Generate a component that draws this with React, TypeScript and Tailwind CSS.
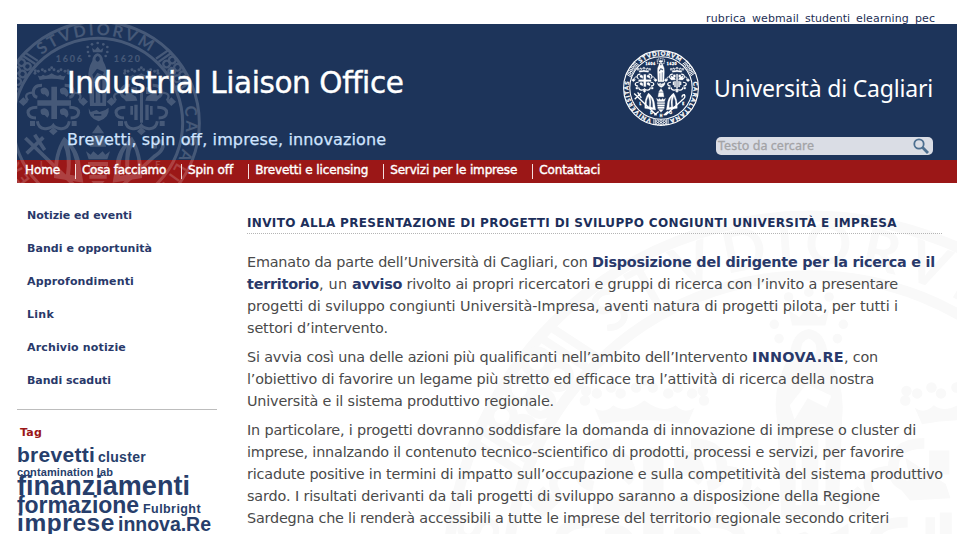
import { useId, useLayoutEffect, useRef } from "react";
import type { ReactNode } from "react";

/** A run of text whose tracking is adjusted so that it fills exactly `w` pixels. */
function Fit({ w, className = "", children }: { w: number; className?: string; children: string }) {
  const ref = useRef<HTMLSpanElement>(null);
  useLayoutEffect(() => {
    const el = ref.current;
    if (!el) return;
    el.style.letterSpacing = "0px";
    const natural = el.getBoundingClientRect().width;
    el.style.letterSpacing = `${(w - natural) / children.length}px`;
  }, [w, children]);
  return (
    <span ref={ref} className={`inline-block whitespace-pre ${className}`}>
      {children}
    </span>
  );
}

function Crown({ x, y }: { x: number; y: number }) {
  return (
    <g transform={`translate(${x} ${y})`}>
      <path d="M-36 22 L-42 8 Q-34 14 -26 6 Q-16 14 0 2 Q16 14 26 6 Q34 14 42 8 L36 22 Q0 15 -36 22Z" />
      {[[-50, 2], [-49, -6], [-40, -4], [-28, -9], [-20, -4], [-7, -9], [0, -15], [7, -9], [20, -4], [28, -9], [40, -4], [49, -6], [50, 2]].map(
        ([dx, dy]) => (
          <circle key={`${dx}${dy}`} cx={dx} cy={dy} r="4.4" />
        ),
      )}
    </g>
  );
}

function Frame({ x, y }: { x: number; y: number }) {
  return (
    <g transform={`translate(${x} ${y})`}>
      <path
        fill="none"
        stroke="currentColor"
        strokeWidth="9"
        d="M-34 -54 Q-62 -54 -60 -30 Q-58 -20 -48 -18 M34 -54 Q62 -54 60 -30 Q58 -20 48 -18 M-48 12 Q-76 12 -76 28 Q-74 44 -52 44 M48 12 Q76 12 76 28 Q74 44 52 44 M-48 54 Q-44 78 -22 76 Q-6 74 0 66 Q6 74 22 76 Q44 78 48 54"
      />
      <path fill="none" stroke="currentColor" strokeWidth="7" d="M-62 -32 Q-92 -30 -76 -8 M62 -32 Q92 -30 76 -8" />
      <path d="M-104 -5 l14 -13 14 13 -14 13Z M76 -5 l14 -13 14 13 -14 13Z M-13 84 l13 -12 13 12 -13 12Z" />
      <path d="M-70 53h15v15h-15Z M55 53h15v15h-15Z" />
    </g>
  );
}

function Knots({ angle }: { angle: number }) {
  return (
    <g transform={`rotate(${angle} 294 369)`} fill="none" stroke="currentColor" strokeWidth="7">
      <path d="M236 68v48M352 68v48M248 67v48M340 67v48" />
      {[267, 294, 321].map((cx) => (
        <g key={cx}>
          <circle cx={cx} cy="78" r="10" />
          <circle cx={cx} cy="99" r="10" />
        </g>
      ))}
    </g>
  );
}

function Seal({ className, years = true }: { className: string; years?: boolean }) {
  const ring = useId();
  const lettering = "font-['Lato','Liberation_Sans',sans-serif] font-bold";
  return (
    <svg viewBox="-15 60 618 618" fill="currentColor" className={className} aria-hidden="true">
      <defs>
        <path id={ring} d="M294 633 A264 264 0 0 1 294 105 A264 264 0 0 1 294 633" />
      </defs>
      <g fill="none" stroke="currentColor" strokeWidth="9">
        <circle cx="294" cy="369" r="304" />
        <circle cx="294" cy="369" r="254" />
      </g>
      <text fontSize="48" className={lettering}>
        <textPath href={`#${ring}`} startOffset="39%" textLength="348">STVDIORVM</textPath>
      </text>
      <text fontSize="48" className={lettering}>
        <textPath href={`#${ring}`} startOffset="72%" textLength="392">CARALITANA</textPath>
      </text>
      <text fontSize="48" className={lettering}>
        <textPath href={`#${ring}`} startOffset="4.7%" textLength="388">VNIVERSITAS</textPath>
      </text>
      <Knots angle={-57} />
      <Knots angle={55} />
      <Knots angle={180} />
      <g fontSize="27" className={lettering}>
        {years && (
          <>
            <text x="167" y="186" textLength="79">1606</text>
            <text x="341" y="186" textLength="79">1620</text>
          </>
        )}
        <text x="120" y="505">L</text>
        <text x="466" y="505">E</text>
        <text x="206" y="580">D</text>
        <text x="284" y="604">H</text>
        <text x="362" y="580">O</text>
      </g>

      {/* crowned figure */}
      {[[264, 156], [263, 141], [276, 133], [293, 129], [310, 133], [322, 141], [322, 156], [268, 168], [317, 168]].map(([x, y]) => (
        <circle key={`${x}-${y}`} cx={x} cy={y} r="4" />
      ))}
      <path d="M279 157 L276 144 L285 150 L293 140 L301 150 L310 144 L307 157Z" />
      <path
        fillRule="evenodd"
        d="M293 160 Q307 162 309 182 Q324 208 321 234 L318 318 L270 318 L266 234 Q262 208 277 182 Q279 162 293 160Z M293 168 Q285 171 287 180 Q293 190 299 180 Q301 171 293 168Z M277 224 L291 206 L312 216 L308 226 L292 218 L281 236Z M282 250h5v58h-5Z M301 240h6v68h-6Z"
      />
      <path fillRule="evenodd" d="M266 325 L272 336 L290 330 L298 336 L316 330 L326 323 Q330 352 296 364 Q264 354 266 325Z M282 342h22v5h-22Z" />

      {/* shield with cross and four heads */}
      <Crown x={155} y={218} />
      <Frame x={160} y={310} />
      <path d="M154 260h17v97h-17Z M112 301h101v16h-101Z" />
      {[[134, 275], [192, 275], [134, 337], [192, 337]].map(([x, y]) => (
        <path key={`${x}-${y}`} d={`M${x - 12} ${y - 8} q12 -10 22 2 q8 14 -2 22 l-8 -8 q-14 2 -12 -16Z`} />
      ))}

      {/* shield with towers and pales */}
      <Crown x={424} y={218} />
      <Frame x={424} y={310} />
      <path d="M420 256h9v112h-9Z M391 318h8v26h-8Z M403 314h10v46h-10Z M436 314h10v46h-10Z M450 318h8v26h-8Z M374 268l34 22 4 12-34 2-10-12 10-6Z M474 268l-34 22-4 12 34 2 10-12-10-6Z M394 262h17v20h-17Z M438 262h17v20h-17Z" />

      {/* central column */}
      <path d="M294 374 L312 400 L276 400Z M258 454l14 10 8-10 14 12 14-12 8 10 14-10-8 24h-56Z M264 486h60v12h-60Z M266 505h56v12h-56Z M268 524h52v12h-52Z M274 543l20 24 20-24Z M276 406h36l6 34h-48Z" />

      {/* crossed staffs and mitres */}
      <path
        fill="none"
        stroke="currentColor"
        strokeWidth="11"
        d="M80 460 L130 412 M76 414 L258 590 M104 404l30 46 M330 590 L462 470 Q500 446 484 424 Q462 424 466 446 M240 590 L275 560 M350 560 L316 590"
      />
      {[1, -1].map((side) => (
        <path
          key={side}
          transform={side === 1 ? undefined : "translate(588 0) scale(-1 1)"}
          fillRule="evenodd"
          d="M192 410 Q240 448 242 500 L250 548 L162 534 Q158 460 192 410Z M190 436 Q172 470 174 520 L198 524 Q206 470 190 436Z M208 440 Q216 480 210 524 L228 527 Q230 474 208 440Z"
        />
      ))}
    </svg>
  );
}

const topLinks: [string, number][] = [
  ["rubrica", 40],
  ["webmail", 47],
  ["studenti", 45],
  ["elearning", 53],
  ["pec", 20],
];

const navItems: [string, number][] = [
  ["Cosa facciamo", 84],
  ["Spin off", 45],
  ["Brevetti e licensing", 113],
  ["Servizi per le imprese", 127],
  ["Contattaci", 61],
];

const sideItems: [string, number][] = [
  ["Notizie ed eventi", 105],
  ["Bandi e opportunità", 125],
  ["Approfondimenti", 107],
  ["Link", 27],
  ["Archivio notizie", 99],
  ["Bandi scaduti", 84],
];

function Line({ children }: { children: ReactNode }) {
  return <span className="flex h-[22px]">{children}</span>;
}

const strong = "font-bold text-[#29396a]";

export default function App() {
  return (
    <div className="h-[534px] w-[976px] overflow-hidden bg-white pl-[17px] font-['DejaVu_Sans',Verdana,sans-serif]">
      <div className="w-[940px]">
        <div className="flex h-6 items-start justify-end gap-[6px] pt-3 pr-[22px] text-[11px] leading-[14px] text-[#1d2f55]">
          {topLinks.map(([label, w]) => (
            <Fit key={label} w={w}>{label}</Fit>
          ))}
        </div>

        <header className="relative h-[159px] overflow-hidden bg-[#1d345a]">
          <div className="flex h-[136px] justify-between pr-6 pl-[50px]">
            <div className="flex flex-col pt-[41px]">
              <h1 className="relative z-10 h-9 text-[29.5px] leading-9 text-white [-webkit-text-stroke:0.4px_white]">
                <Fit w={336}>Industrial Liaison Office</Fit>
              </h1>
              <p className="relative z-10 mt-[29px] text-[16px] leading-5 text-[#cfe4ff] [-webkit-text-stroke:0.25px_#cfe4ff]">
                <Fit w={319}>Brevetti, spin off, imprese, innovazione</Fit>
              </p>
            </div>
            <div className="flex pt-[26px]">
              <Seal className="-ml-px size-[76px] stroke-current text-white [stroke-width:2.5]" />
              <div className="ml-[17px] flex w-[217px] flex-col">
                <div className="mt-[22px] -ml-[2px] h-8 font-['Noto_Sans','Open_Sans',sans-serif] text-[23px] leading-8 text-white">
                  <Fit w={219}>Università di Cagliari</Fit>
                </div>
                <div className="mt-[33px] flex h-[18px] items-center justify-between rounded-[5px] bg-[#dadde5] pr-1 pl-[2px] text-[#a3a3a6]">
                  <Fit w={96} className="font-['Noto_Sans','Open_Sans',sans-serif] text-[12.5px] leading-[18px] [-webkit-text-stroke:0.3px_#a3a3a6]">Testo da cercare</Fit>
                  <svg viewBox="0 0 16 16" className="size-4 text-[#4d6f90]" fill="none" stroke="currentColor" aria-hidden="true">
                    <circle cx="6" cy="6" r="4.7" strokeWidth="1.8" />
                    <path d="M9.6 9.6 L15 15" strokeWidth="2.8" />
                  </svg>
                </div>
              </div>
            </div>
          </div>
          <nav className="flex h-[23px] items-start bg-[#9b1717] pl-2 text-[12px] leading-5 text-white [-webkit-text-stroke:0.4px_white]">
            <Fit w={35} className="relative z-10">Home</Fit>
            {navItems.map(([label, w]) => (
              <span key={label} className="relative z-10 ml-[15px] flex">
                <span className="mt-1 mr-[6px] h-[15px] w-px bg-[#f3dede]" />
                <Fit w={w}>{label}</Fit>
              </span>
            ))}
          </nav>
          <Seal className="absolute -top-1 left-[-22px] size-[206px] text-white opacity-[0.18]" />
        </header>

        <div className="relative flex h-[351px] overflow-hidden">
          <Seal years={false} className="absolute top-[27px] left-[425px] size-[736px] text-[#f9f9f9]" />

          <aside className="relative w-[200px] shrink-0">
            <ul className="h-[227px] border-b border-[#bdbdbd] pt-4 pl-[10px] text-[11px] font-bold text-[#29396a]">
              {sideItems.map(([label, w]) => (
                <li key={label} className="h-[33px] leading-[33px]">
                  <Fit w={w}>{label}</Fit>
                </li>
              ))}
            </ul>
            <h2 className="mt-[15px] h-5 pl-[3px] text-[11px] leading-[16px] font-bold text-[#9b1717]">
              <Fit w={22}>Tag</Fit>
            </h2>
            <div className="font-['Liberation_Sans',Arial,sans-serif] font-bold text-[#273e6b]">
              <div className="flex h-5 items-baseline gap-[3px] leading-5">
                <Fit w={78} className="text-[21px]">brevetti</Fit>
                <Fit w={48} className="text-[14px]">cluster</Fit>
              </div>
              <div className="flex h-[13px] items-baseline pt-px leading-[13px]">
                <Fit w={96} className="text-[11px]">contamination lab</Fit>
              </div>
              <div className="flex h-[17px] items-baseline leading-[17px]">
                <Fit w={173} className="text-[27px]">finanziamenti</Fit>
              </div>
              <div className="flex h-5 items-baseline gap-1 leading-5">
                <Fit w={122} className="text-[23px]">formazione</Fit>
                <Fit w={58} className="text-[12.5px]">Fulbright</Fit>
              </div>
              <div className="flex h-4 items-baseline gap-[3px] leading-4">
                <Fit w={98} className="text-[24.5px]">imprese</Fit>
                <Fit w={93} className="text-[19.5px]">innova.Re</Fit>
              </div>
            </div>
          </aside>

          <main className="relative ml-[30px] w-[695px] pt-8">
            <h2 className="h-[19px] border-b border-dotted border-[#b5b5b5] text-[12px] leading-4 font-bold text-[#1d2f5b]">
              <Fit w={650}>INVITO ALLA PRESENTAZIONE DI PROGETTI DI SVILUPPO CONGIUNTI UNIVERSITÀ E IMPRESA</Fit>
            </h2>
            <div className="mt-[17px] flex flex-col gap-[7px] text-[14.4px] leading-[22px] text-[#4a4a4a]">
              <p>
                <Line>
                  <Fit w={345}>{"Emanato da parte dell’Università di Cagliari, con "}</Fit>
                  <Fit w={343} className={strong}>Disposizione del dirigente per la ricerca e il</Fit>
                </Line>
                <Line>
                  <Fit w={72} className={strong}>territorio</Fit>
                  <Fit w={33}>{", un "}</Fit>
                  <Fit w={50} className={strong}>avviso</Fit>
                  <Fit w={496}>{" rivolto ai propri ricercatori e gruppi di ricerca con l’invito a presentare"}</Fit>
                </Line>
                <Line><Fit w={651}>progetti di sviluppo congiunti Università-Impresa, aventi natura di progetti pilota, per tutti i</Fit></Line>
                <Line><Fit w={141}>settori d’intervento.</Fit></Line>
              </p>
              <p>
                <Line>
                  <Fit w={505}>{"Si avvia così una delle azioni più qualificanti nell’ambito dell’Intervento "}</Fit>
                  <Fit w={92} className={strong}>INNOVA.RE</Fit>
                  <Fit w={34}>, con</Fit>
                </Line>
                <Line><Fit w={627}>l’obiettivo di favorire un legame più stretto ed efficace tra l’attività di ricerca della nostra</Fit></Line>
                <Line><Fit w={307}>Università e il sistema produttivo regionale.</Fit></Line>
              </p>
              <p>
                <Line><Fit w={669}>In particolare, i progetti dovranno soddisfare la domanda di innovazione di imprese o cluster di</Fit></Line>
                <Line><Fit w={657}>imprese, innalzando il contenuto tecnico-scientifico di prodotti, processi e servizi, per favorire</Fit></Line>
                <Line><Fit w={696}>ricadute positive in termini di impatto sull’occupazione e sulla competitività del sistema produttivo</Fit></Line>
                <Line><Fit w={633}>sardo. I risultati derivanti da tali progetti di sviluppo saranno a disposizione della Regione</Fit></Line>
                <Line><Fit w={642}>Sardegna che li renderà accessibili a tutte le imprese del territorio regionale secondo criteri</Fit></Line>
              </p>
            </div>
          </main>
        </div>
      </div>
    </div>
  );
}
